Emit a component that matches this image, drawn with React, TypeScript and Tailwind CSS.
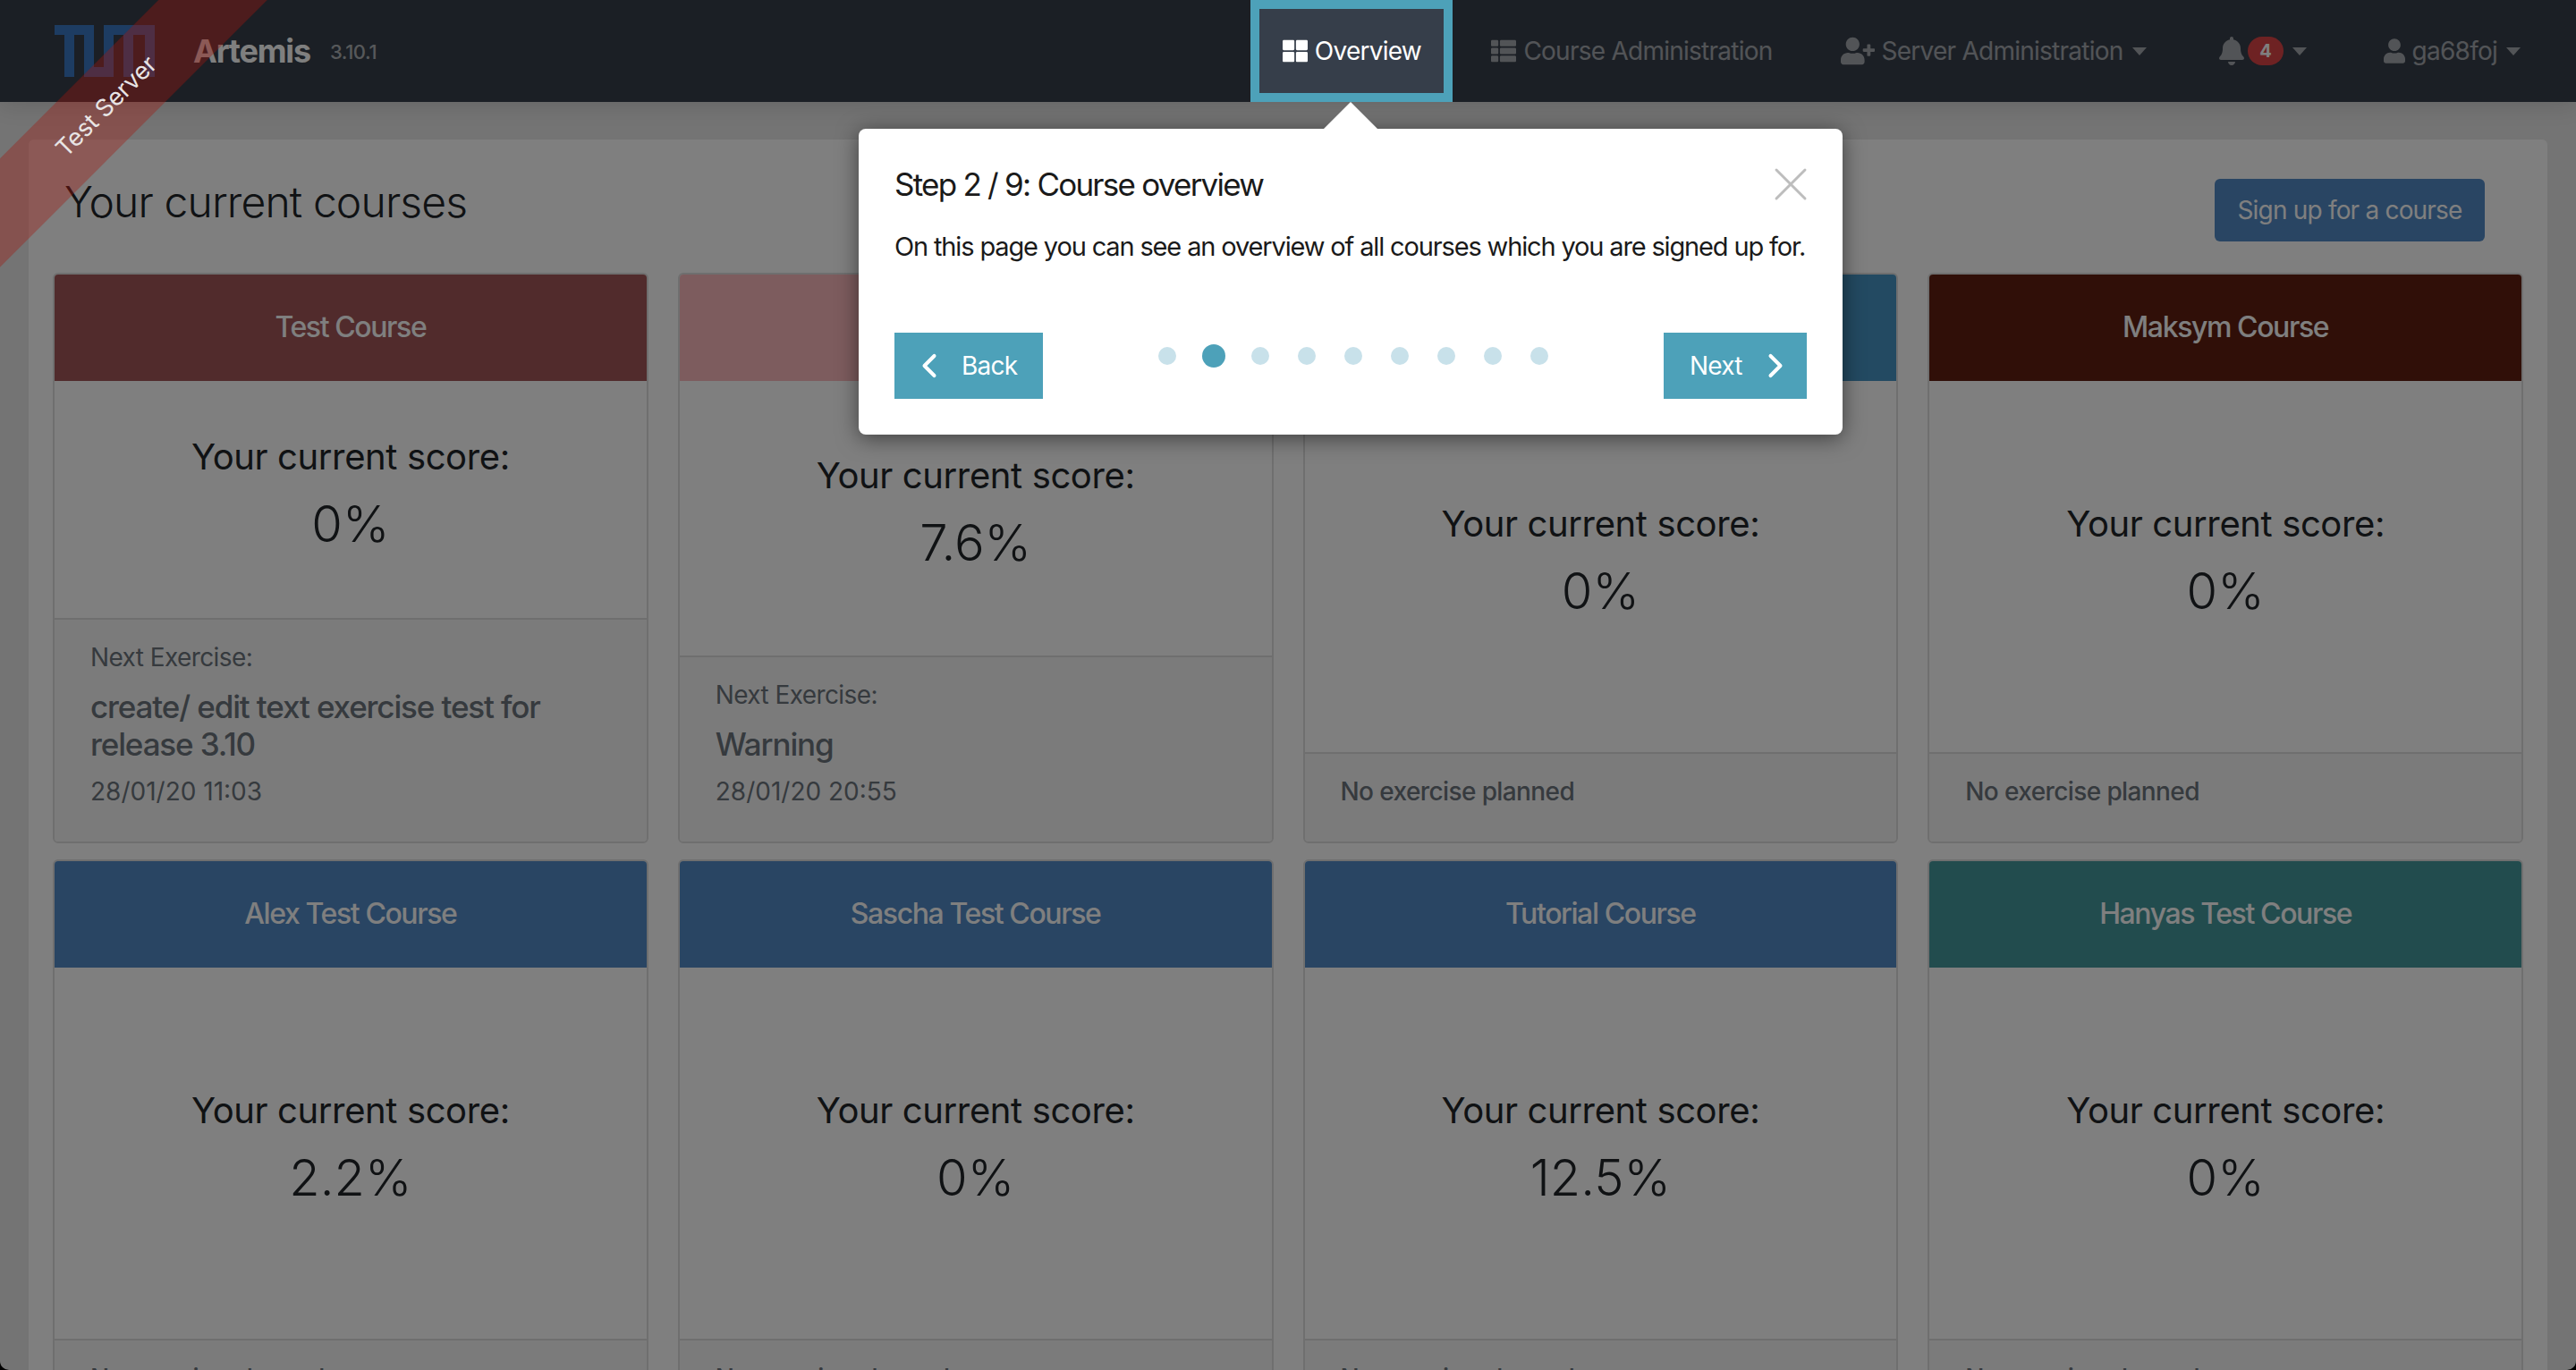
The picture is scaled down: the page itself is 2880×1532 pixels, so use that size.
import React from "react";
import { FaThLarge, FaThList, FaUserPlus, FaBell, FaUser } from "react-icons/fa";
import { ChevronLeft, ChevronRight, X } from "lucide-react";

type Course = {
  name: string;
  color: string;
  score: string;
  exercise?: string;
  date?: string;
};

const courses: Course[] = [
  { name: "Test Course", color: "bg-[#a25658]", score: "0%", exercise: "create/ edit text exercise test for release 3.10", date: "28/01/20 11:03" },
  { name: "Patricks Course", color: "bg-[#fab8bc]", score: "7.6%", exercise: "Warning", date: "28/01/20 20:55" },
  { name: "Krusche Course", color: "bg-[#4694c4]", score: "0%" },
  { name: "Maksym Course", color: "bg-[#601e10]", score: "0%" },
  { name: "Alex Test Course", color: "bg-[#528ac6]", score: "2.2%" },
  { name: "Sascha Test Course", color: "bg-[#528ac6]", score: "0%" },
  { name: "Tutorial Course", color: "bg-[#528ac6]", score: "12.5%" },
  { name: "Hanyas Test Course", color: "bg-[#44989c]", score: "0%" },
];

function Caret() {
  return <span className="ml-[10px] inline-block h-0 w-0 border-x-[8px] border-t-[9px] border-x-transparent border-t-white/55" />;
}

function Logo() {
  return (
    <svg width="112" height="58" viewBox="0 0 112 58" fill="#3a78c4" aria-hidden="true">
      <rect x="0" y="0" width="44" height="11" />
      <rect x="11" y="0" width="11" height="58" />
      <rect x="33" y="0" width="11" height="58" />
      <rect x="33" y="47" width="33" height="11" />
      <rect x="55" y="0" width="11" height="58" />
      <rect x="55" y="0" width="57" height="11" />
      <rect x="77" y="0" width="11" height="58" />
      <rect x="101" y="0" width="11" height="58" />
    </svg>
  );
}

function Card({ course }: { course: Course }) {
  return (
    <div className="flex h-[638px] flex-col overflow-hidden rounded-[6px] border-2 border-[#dedede] bg-white">
      <div className={`flex h-[119px] shrink-0 items-center justify-center pb-[2px] text-[32px] font-medium tracking-[-1.4px] text-white ${course.color}`}>
        {course.name}
      </div>
      <div className="flex flex-1 flex-col items-center justify-center pb-[10px] text-[#212529]">
        <div className="text-[40px] leading-[48px] tracking-[-0.38px]">Your current score:</div>
        <div className="mt-[18px] text-[56px] font-light leading-[67px]">{course.score}</div>
      </div>
      <div className="border-t-2 border-[#dedede] bg-[#f7f7f7] px-[40px] pb-[39px] pt-[25px] text-[#6c757d]">
        {course.exercise ? (
          <>
            <div className="text-[28px] leading-[34px] tracking-[-0.6px]">Next Exercise:</div>
            <div className="mb-[15px] mt-[17px] text-[35px] font-medium leading-[42px] tracking-[-1.13px]">{course.exercise}</div>
            <div className="text-[28px] leading-[34px]">{course.date}</div>
          </>
        ) : (
          <div className="text-[28px] font-medium leading-[34px] tracking-[-0.6px]">No exercise planned</div>
        )}
      </div>
    </div>
  );
}

export default function App() {
  return (
    <div className="relative h-[1532px] w-full overflow-hidden bg-black font-['Inter',sans-serif]">
      <div className="h-full overflow-hidden rounded-b-[10px] bg-[#e8e8e8]">
        <nav className="flex h-[114px] items-center bg-[#363e4a] pl-[61px] pr-[62px] shadow-[0_4px_24px_rgba(0,0,0,0.12)]">
          <Logo />
          <span className="ml-[43px] text-[36px] font-bold tracking-[-1.2px] text-white">Artemis</span>
          <span className="ml-[22px] mt-[2px] text-[22px] font-medium tracking-[-0.4px] text-white/60">3.10.1</span>

          <div className="ml-auto flex h-full items-center text-[28px] tracking-[-0.75px] text-white/55">
            <div className="relative z-20 flex h-full w-[226px] items-center justify-center gap-[8px] border-[10px] border-[#4da1b9] bg-[#363e4a] text-white">
              <FaThLarge className="h-[28px] w-[28px]" />
              <span>Overview</span>
            </div>
            <div className="ml-[43px] flex items-center gap-[8px]">
              <FaThList className="h-[28px] w-[28px]" />
              <span>Course Administration</span>
            </div>
            <div className="ml-[76px] flex items-center">
              <FaUserPlus className="mr-[8px] h-[32px] w-[38px]" />
              <span>Server Administration</span>
              <Caret />
            </div>
            <div className="ml-[81px] flex items-center">
              <FaBell className="h-[32px] w-[28px]" />
              <span className="ml-[4px] flex h-[32px] w-[40px] items-center justify-center rounded-full bg-[#dc4546] text-[20px] font-bold leading-none text-white">4</span>
              <Caret />
            </div>
            <div className="ml-[86px] flex items-center">
              <FaUser className="mr-[8px] h-[30px] w-[24px]" />
              <span>ga68foj</span>
              <Caret />
            </div>
          </div>
        </nav>

        <main className="mx-[32px] mt-[42px] rounded-[6px] bg-white px-[27px] pt-[44px]">
          <div className="mb-[35px] flex h-[70px] items-center justify-between pl-[13px] pr-[43px]">
            <h1 className="pb-[18px] text-[48px] font-light tracking-[-0.85px] text-[#212529]">Your current courses</h1>
            <button className="h-[70px] w-[302px] rounded-[6px] bg-[#528ac6] text-[28px] tracking-[-0.8px] text-white">Sign up for a course</button>
          </div>
          <div className="grid grid-cols-4 gap-x-[33px] gap-y-[18px]">
            {courses.map((c) => (
              <Card key={c.name} course={c} />
            ))}
          </div>
        </main>
      </div>

      {/* dimming layer of the guided tour */}
      <div className="absolute inset-0 z-10 bg-black/50" />

      {/* ribbon */}
      <div className="pointer-events-none absolute left-0 top-0 z-30 h-[300px] w-[300px] overflow-hidden">
        <div className="absolute left-[-131px] top-[76px] flex h-[86px] w-[500px] -rotate-45 items-center justify-center bg-[rgba(162,25,15,0.37)] text-[27px] text-[#e8e4e4]">
          Test Server
        </div>
      </div>

      {/* tour step */}
      <div className="absolute left-[960px] top-[144px] z-40 h-[342px] w-[1100px] rounded-[8px] bg-white px-[40px] pt-[40px] shadow-[0_4px_24px_rgba(0,0,0,0.5)]">
        <div className="absolute left-[520px] top-[-30px] h-0 w-0 border-x-[30px] border-b-[30px] border-x-transparent border-b-white" />
        <div className="flex items-center justify-between text-[#1a1a1a]">
          <h2 className="text-[35px] leading-[44px] tracking-[-1.76px]">Step 2 / 9: Course overview</h2>
          <X className="my-[-10px] mr-[-14px] h-[64px] w-[64px] text-[#bdbdbd]" strokeWidth={1.1} />
        </div>
        <p className="mt-[29px] whitespace-nowrap text-[29px] leading-[38px] tracking-[-1.15px] text-[#1a1a1a]">
          On this page you can see an overview of all courses which you are signed up for.
        </p>
        <div className="mt-[77px] flex items-start justify-between">
          <button className="flex h-[74px] w-[166px] items-center gap-[14px] bg-[#4da1b9] pl-[17px] text-[28px] tracking-[-0.8px] text-white">
            <ChevronLeft className="h-[44px] w-[44px]" strokeWidth={2.2} />
            <span>Back</span>
          </button>
          <div className="mt-[13px] flex items-center">
            {Array.from({ length: 9 }).map((_, i) => (
              <div key={i} className="flex h-[26px] w-[52px] items-center justify-center">
                {i === 1 ? (
                  <span className="h-[26px] w-[26px] rounded-full bg-[#4da1b9]" />
                ) : (
                  <span className="h-[20px] w-[20px] rounded-full bg-[#c8e1ea]" />
                )}
              </div>
            ))}
          </div>
          <button className="flex h-[74px] w-[160px] items-center gap-[15px] bg-[#4da1b9] pl-[29px] text-[28px] tracking-[-0.8px] text-white">
            <span>Next</span>
            <ChevronRight className="h-[44px] w-[44px]" strokeWidth={2.2} />
          </button>
        </div>
      </div>
    </div>
  );
}
